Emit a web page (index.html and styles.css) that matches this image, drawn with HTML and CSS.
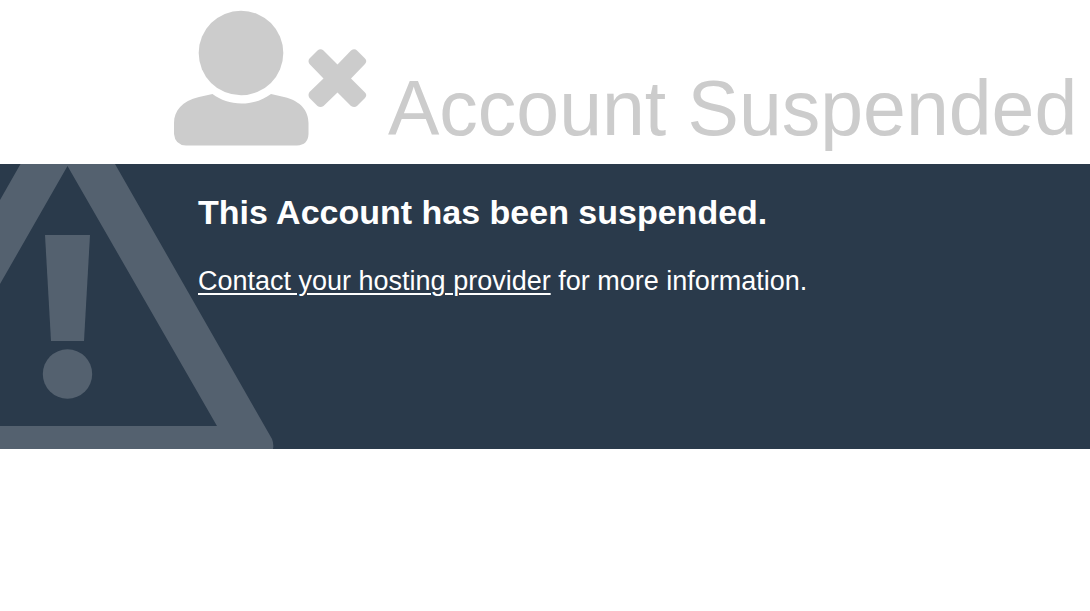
FILE: index.html
```html
<!DOCTYPE html>
<html lang="en">
<head>
<meta charset="utf-8">
<meta name="viewport" content="width=device-width, initial-scale=1">
<title>Account Suspended</title>
<link rel="stylesheet" href="styles.css">
</head>
<body>
<header class="masthead">
  <svg class="user-icon" width="194" height="136" viewBox="0 0 194 136" aria-hidden="true">
    <circle cx="67" cy="43" r="42.300"/>
    <path d="M38.500 84C47 90 56 93.500 67.500 93.500S89 90 97 84L110 87C127 91 134.500 101 134.500 113V124Q134 135 123 135.500H12Q1 135 0 124V113C0 101 8 91 25 87Z"/>
    <path d="M163.500 54.500 177 40.500Q180.500 38 183 40.500L191 48.500Q193.500 51 191 54L177 68.500 191 82.500Q193.500 85 191 88L183 96Q180.500 98 177 96L163.500 82.500 149.500 96Q146.500 98 143.500 96L135.500 88Q133.500 85 135.500 82L149.500 68.500 135.500 54Q133.500 51 135.500 48.500L143.500 40.500Q146.500 38 149.500 40.500Z"/>
  </svg>
  <h1 class="title">Account Suspended</h1>
</header>
<main class="notice">
  <svg class="warning-icon" width="274" height="285" viewBox="0 0 274 285" aria-hidden="true">
    <path fill-rule="evenodd" d="M20.500 0H115L272 275Q274 280 273 285H0V262H217L67.500 2 0 120V36Z"/>
    <path d="M45 71H90L84 177H51Z"/>
    <circle cx="67.500" cy="210" r="24.700"/>
  </svg>
  <div class="message">
    <h2 class="heading">This Account has been suspended.</h2>
    <p class="details"><a class="contact" href="#">Contact your hosting provider</a> for more information.</p>
  </div>
</main>
</body>
</html>
```
FILE: styles.css
```css
body {
  margin: 0;
  background: #fff;
  font-family: "Liberation Sans", Arial, sans-serif;
}

.masthead {
  display: flex;
  align-items: flex-end;
  gap: 20px;
  padding: 10px 16px 18px 174px;
  color: #ccc;
}

.user-icon {
  flex: none;
  fill: currentColor;
}

.title {
  margin: 0;
  font-size: 77px;
  font-weight: 400;
  line-height: 76px;
  white-space: nowrap;
}

.notice {
  position: relative;
  box-sizing: border-box;
  min-height: 285px;
  padding: 28px 16px 32px 198px;
  overflow: hidden;
  background: #2a3a4b;
  color: #fff;
}

.warning-icon {
  position: absolute;
  left: 0;
  bottom: 0;
  fill: #54616f;
}

.message {
  position: relative;
}

.heading {
  margin: 0 0 29px;
  font-size: 34px;
  line-height: 40px;
}

.details {
  margin: 0;
  font-size: 27px;
  line-height: 40px;
}

.contact {
  color: inherit;
  text-decoration: underline;
  text-decoration-thickness: 2px;
  text-underline-offset: 3px;
}
```
